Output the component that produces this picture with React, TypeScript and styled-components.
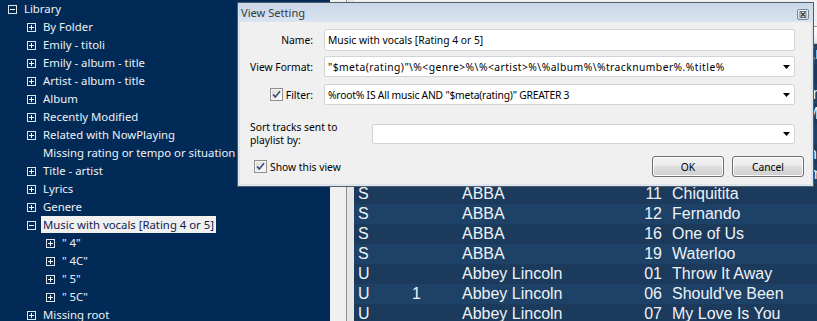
import React from "react";
import styled, { createGlobalStyle } from "styled-components";

const GlobalStyle = createGlobalStyle`
  html, body { margin: 0; padding: 0; background: #012b56; overflow: hidden; }
  * { box-sizing: border-box; }
`;

const Screen = styled.div`
  position: relative;
  width: 817px;
  height: 321px;
  display: flex;
  overflow: hidden;
  font-family: "Noto Sans", sans-serif;
`;

/* ---------- Tree ---------- */
const TreePanel = styled.div`
  width: 330px;
  flex: none;
  background: #012b56;
  color: #edf1f6;
  font-size: 11.35px;
`;

const TreeList = styled.div`
  margin-top: -1px;
  display: flex;
  flex-direction: column;
`;

const TreeRow = styled.div<{ $level: number }>`
  display: flex;
  align-items: center;
  height: 18px;
  padding-left: ${(p) => 8 + p.$level * 19}px;
  white-space: nowrap;
`;

const ExpanderBox = styled.span`
  width: 9px;
  height: 9px;
  flex: none;
  margin-right: 7px;
  margin-top: 3px;
  display: flex;
`;

const ExpanderSpace = styled.span`
  width: 16px;
  flex: none;
`;

const TreeLabel = styled.span<{ $selected?: boolean }>`
  display: inline-flex;
  align-items: center;
  height: 17px;
  padding: 0 2px;
  margin-left: -2px;
  background: ${(p) => (p.$selected ? "#f0f0f0" : "transparent")};
  color: ${(p) => (p.$selected ? "#101c4e" : "inherit")};
`;

type Exp = "plus" | "minus" | "none";

const Expander: React.FC<{ kind: Exp }> = ({ kind }) => {
  if (kind === "none") return <ExpanderSpace />;
  return (
    <ExpanderBox>
      <svg width="9" height="9" viewBox="0 0 9 9">
        <rect x="0.5" y="0.5" width="8" height="8" fill="none" stroke="#dfe6ee" />
        <line x1="2" y1="4.5" x2="7" y2="4.5" stroke="#ffffff" />
        {kind === "plus" && <line x1="4.5" y1="2" x2="4.5" y2="7" stroke="#ffffff" />}
      </svg>
    </ExpanderBox>
  );
};

const treeItems: { level: number; exp: Exp; text: string; selected?: boolean }[] = [
  { level: 0, exp: "minus", text: "Library" },
  { level: 1, exp: "plus", text: "By Folder" },
  { level: 1, exp: "plus", text: "Emily - titoli" },
  { level: 1, exp: "plus", text: "Emily - album - title" },
  { level: 1, exp: "plus", text: "Artist - album - title" },
  { level: 1, exp: "plus", text: "Album" },
  { level: 1, exp: "plus", text: "Recently Modified" },
  { level: 1, exp: "plus", text: "Related with NowPlaying" },
  { level: 1, exp: "none", text: "Missing rating or tempo or situation" },
  { level: 1, exp: "plus", text: "Title - artist" },
  { level: 1, exp: "plus", text: "Lyrics" },
  { level: 1, exp: "plus", text: "Genere" },
  { level: 1, exp: "minus", text: "Music with vocals [Rating 4 or 5]", selected: true },
  { level: 2, exp: "plus", text: '" 4"' },
  { level: 2, exp: "plus", text: '" 4C"' },
  { level: 2, exp: "plus", text: '" 5"' },
  { level: 2, exp: "plus", text: '" 5C"' },
  { level: 1, exp: "plus", text: "Missing root" },
];

/* ---------- Splitter ---------- */
const Splitter = styled.div`
  width: 24px;
  flex: none;
  background: linear-gradient(
    to right,
    #f0f0f0 0,
    #f0f0f0 16px,
    #8d8d8d 16px,
    #8d8d8d 17px,
    #e6e6e6 17px,
    #e6e6e6 24px
  );
`;

/* ---------- Track list ---------- */
const ListPanel = styled.div`
  flex: 1;
  display: flex;
  flex-direction: column;
  background: #1b3a5c;
  font-family: "Liberation Sans", Arial, sans-serif;
  font-size: 16px;
  color: #eef2f7;
`;

const ListToolbar = styled.div`
  height: 27px;
  flex: none;
  background: #f0f0f0;
  border-bottom: 1px solid #9a9a9a;
`;

const ListHeader = styled.div`
  height: 17px;
  flex: none;
  background: linear-gradient(#ffffff, #e4e6ea);
  border-bottom: 1px solid #b8bcc4;
`;

const TrackRow = styled.div<{ $alt: boolean }>`
  display: grid;
  grid-template-columns: 58px 50px 154px 46px 1fr;
  height: 20px;
  line-height: 20px;
  flex: none;
  white-space: nowrap;
  background: ${(p) => (p.$alt ? "#1e4267" : "#1b3a5c")};
`;

const Cell = styled.span<{ $align?: "left" | "right"; $pad?: number }>`
  text-align: ${(p) => p.$align ?? "left"};
  padding-left: ${(p) => p.$pad ?? 0}px;
  overflow: hidden;
`;

const tracks: [string, string, string, string, string][] = [
  ["S", "", "ABBA", "02", "Does Your Mother Know"],
  ["S", "", "ABBA", "03", "Dancing Queen"],
  ["S", "", "ABBA", "04", "Knowing Me, Knowing You"],
  ["S", "", "ABBA", "05", "Take a Chance on Me"],
  ["S", "", "ABBA", "07", "Mamma Mia"],
  ["S", "", "ABBA", "08", "Lay All Your Love on Me"],
  ["S", "", "ABBA", "10", "Gimme! Gimme! Gimme!"],
  ["S", "", "ABBA", "11", "Chiquitita"],
  ["S", "", "ABBA", "12", "Fernando"],
  ["S", "", "ABBA", "16", "One of Us"],
  ["S", "", "ABBA", "19", "Waterloo"],
  ["U", "", "Abbey Lincoln", "01", "Throw It Away"],
  ["U", "1", "Abbey Lincoln", "06", "Should've Been"],
  ["U", "", "Abbey Lincoln", "07", "My Love Is You"],
];

/* ---------- Dialog ---------- */
const Dialog = styled.div`
  position: absolute;
  left: 237px;
  top: 2px;
  width: 577px;
  height: 185px;
  border: 1px solid #4f5d6d;
  background: #dde6ef;
  padding: 0 2px 2px 2px;
  display: flex;
  flex-direction: column;
  font-family: "Noto Sans", sans-serif;
  font-size: 10.3px;
  color: #000;
`;

const TitleBar = styled.div`
  height: 19px;
  flex: none;
  display: flex;
  align-items: center;
  justify-content: space-between;
  background: linear-gradient(#c9d7e7, #d9e4ef);
  margin: 0 -2px;
  padding-left: 3px;
  padding-right: 4px;
`;

const TitleText = styled.span`
  font-size: 11.1px;
  color: #3b3b3b;
`;

const CloseBox = styled.span`
  display: flex;
  margin-top: 3px;
`;

const Body = styled.div`
  flex: 1;
  background: #f0f0f0;
  display: flex;
  flex-direction: column;
`;

const FieldRow = styled.div<{ $top: number; $h: number }>`
  display: flex;
  align-items: center;
  margin-top: ${(p) => p.$top}px;
  height: ${(p) => p.$h}px;
  padding-right: 16px;
  flex: none;
`;

const FieldLabel = styled.span`
  width: 73px;
  margin-right: 11px;
  display: flex;
  justify-content: flex-end;
  align-items: center;
  gap: 3px;
  white-space: nowrap;
  flex: none;
`;

const SortLabel = styled.span`
  width: 132px;
  padding-left: 10px;
  line-height: 13.5px;
  flex: none;
  white-space: nowrap;
`;

const TextBox = styled.div`
  flex: 1;
  height: 100%;
  background: #ffffff;
  border: 1px solid #d2d4d7;
  border-radius: 2px;
  display: flex;
  align-items: center;
  padding: 0 4px 0 3px;
  white-space: nowrap;
  overflow: hidden;
`;

const BoxText = styled.span<{ $spacing?: number }>`
  flex: 1;
  overflow: hidden;
  letter-spacing: ${(p) => p.$spacing ?? 0}px;
`;

const Arrow = styled.span`
  display: flex;
  flex: none;
  margin-left: 4px;
`;

const Footer = styled.div`
  display: flex;
  align-items: center;
  margin-top: 12px;
  height: 21px;
  padding-left: 14px;
  padding-right: 7px;
  flex: none;
`;

const CheckLabel = styled.span`
  display: flex;
  align-items: center;
  gap: 3px;
  flex: 1;
`;

const Buttons = styled.div`
  display: flex;
  gap: 8px;
`;

const Button = styled.button`
  width: 72px;
  height: 21px;
  border: 1px solid #707070;
  border-radius: 3px;
  background: linear-gradient(#f2f2f2 0%, #ebebeb 50%, #dddddd 50%, #cfcfcf 100%);
  box-shadow: inset 0 0 0 1px #fcfcfc;
  font-family: "Noto Sans", sans-serif;
  font-size: 10.3px;
  color: #000;
  padding: 0;
`;

const CheckBox: React.FC = () => (
  <svg width="13" height="13" viewBox="0 0 13 13" style={{ flex: "none" }}>
    <defs>
      <linearGradient id="cbg" x1="0" y1="0" x2="1" y2="1">
        <stop offset="0" stopColor="#dcdcdc" />
        <stop offset="1" stopColor="#fbfbfb" />
      </linearGradient>
    </defs>
    <rect x="0.5" y="0.5" width="12" height="12" fill="#f6f6f6" stroke="#8e8f8f" />
    <rect x="2" y="2" width="9" height="9" fill="url(#cbg)" />
    <path d="M3 6.4 L5.3 9 L10 3.3" fill="none" stroke="#3a4d78" strokeWidth="1.6" />
  </svg>
);

const DropArrow: React.FC = () => (
  <Arrow>
    <svg width="7" height="4" viewBox="0 0 7 4">
      <polygon points="0,0 7,0 3.5,4" fill="#000" />
    </svg>
  </Arrow>
);

export default function App() {
  return (
    <>
      <GlobalStyle />
      <Screen>
        <TreePanel>
          <TreeList>
            {treeItems.map((t, i) => (
              <TreeRow key={i} $level={t.level}>
                <Expander kind={t.exp} />
                <TreeLabel $selected={t.selected}>{t.text}</TreeLabel>
              </TreeRow>
            ))}
          </TreeList>
        </TreePanel>
        <Splitter />
        <ListPanel>
          <ListToolbar />
          <ListHeader />
          {tracks.map((r, i) => (
            <TrackRow key={i} $alt={i % 2 === 0}>
              <Cell $pad={4}>{r[0]}</Cell>
              <Cell>{r[1]}</Cell>
              <Cell>{r[2]}</Cell>
              <Cell $align="right">{r[3]}</Cell>
              <Cell $pad={10}>{r[4]}</Cell>
            </TrackRow>
          ))}
        </ListPanel>

        <Dialog>
          <TitleBar>
            <TitleText>View Setting</TitleText>
            <CloseBox>
              <svg width="12" height="11" viewBox="0 0 12 11">
                <defs>
                  <linearGradient id="clg" x1="0" y1="0" x2="0" y2="1">
                    <stop offset="0" stopColor="#f4f7fa" />
                    <stop offset="1" stopColor="#d6dee8" />
                  </linearGradient>
                </defs>
                <rect x="0.5" y="0.5" width="11" height="10" rx="1.5" fill="url(#clg)" stroke="#76879a" />
                <rect x="3" y="2.5" width="6" height="6" fill="none" stroke="#555" strokeWidth="0.8" />
                <path d="M4 3.5 L8 7.5 M8 3.5 L4 7.5" stroke="#333" strokeWidth="1.1" />
              </svg>
            </CloseBox>
          </TitleBar>
          <Body>
            <FieldRow $top={7} $h={22}>
              <FieldLabel>Name:</FieldLabel>
              <TextBox>
                <BoxText>Music with vocals [Rating 4 or 5]</BoxText>
              </TextBox>
            </FieldRow>
            <FieldRow $top={5} $h={21}>
              <FieldLabel>View Format:</FieldLabel>
              <TextBox>
                <BoxText $spacing={0.45}>
                  "$meta(rating)"\%&lt;genre&gt;%\%&lt;artist&gt;%\%album%\%tracknumber%.%title%
                </BoxText>
                <DropArrow />
              </TextBox>
            </FieldRow>
            <FieldRow $top={7} $h={21}>
              <FieldLabel>
                <CheckBox />
                Filter:
              </FieldLabel>
              <TextBox>
                <BoxText $spacing={-0.2}>%root% IS All music AND "$meta(rating)" GREATER 3</BoxText>
                <DropArrow />
              </TextBox>
            </FieldRow>
            <FieldRow $top={19} $h={20}>
              <SortLabel>
                Sort tracks sent to
                <br />
                playlist by:
              </SortLabel>
              <TextBox>
                <BoxText />
                <DropArrow />
              </TextBox>
            </FieldRow>
            <Footer>
              <CheckLabel>
                <CheckBox />
                Show this view
              </CheckLabel>
              <Buttons>
                <Button>OK</Button>
                <Button>Cancel</Button>
              </Buttons>
            </Footer>
          </Body>
        </Dialog>
      </Screen>
    </>
  );
}
